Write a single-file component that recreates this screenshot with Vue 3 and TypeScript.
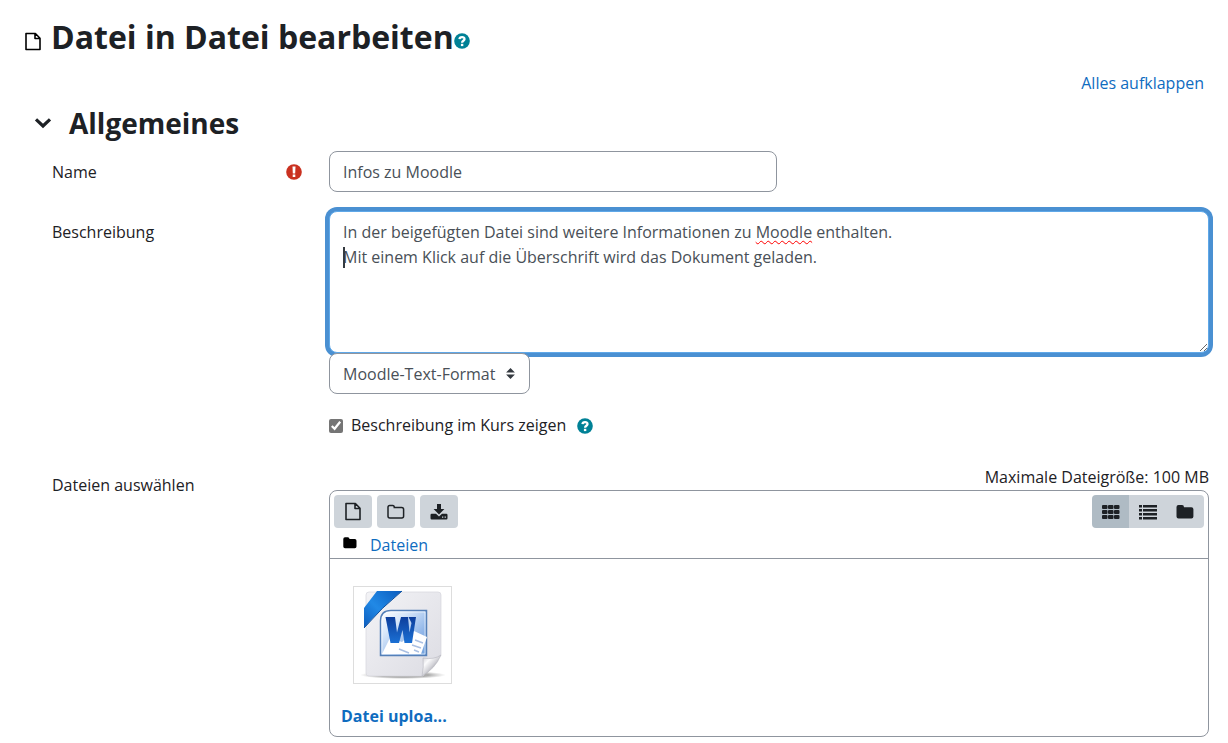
<script setup lang="ts">
import { ref } from 'vue'

const name = ref('Infos zu Moodle')
const lines = [
  { before: 'In der beigefügten Datei sind weitere Informationen zu ', marked: 'Moodle', after: ' enthalten.' },
  { before: 'Mit einem Klick auf die Überschrift wird das Dokument geladen.', marked: '', after: '' },
]
const description = ref(lines.map((l) => l.before + l.marked + l.after).join('\n'))
const format = ref('moodle')
const showDescription = ref(true)
const view = ref('icons')
</script>

<template>
  <main class="page">
    <header class="title">
      <svg class="title-icon" width="16" height="19" viewBox="0 0 16 19" aria-hidden="true">
        <path d="M1 1.5H10.4L15 6.2V17.5H1Z M10 1.5V6.5H15" fill="none" stroke="#000" stroke-width="1.6" stroke-linejoin="round" />
      </svg>
      <h1>Datei in Datei bearbeiten</h1>
      <button type="button" class="help" aria-label="Hilfe zu Datei">
        <svg width="16" height="16" viewBox="0 0 16 16" aria-hidden="true">
          <circle cx="8" cy="8" r="7.8" fill="#008196" />
          <path d="M5.5 6.1C5.7 3.4 10.7 3.5 10.5 6.2C10.4 7.8 8.1 7.7 8.1 9.7" fill="none" stroke="#fff" stroke-width="2.3" />
          <rect x="6.9" y="10.8" width="2.4" height="2.3" fill="#fff" />
        </svg>
      </button>
    </header>

    <form @submit.prevent>
      <div class="expand"><a href="#">Alles aufklappen</a></div>

      <div class="section">
        <button type="button" class="toggle" aria-label="Allgemeines einklappen">
          <svg width="18" height="12" viewBox="0 0 18 12" aria-hidden="true">
            <path d="M2 2.3L9 9L16 2.3" fill="none" stroke="#1d2125" stroke-width="3.2" />
          </svg>
        </button>
        <h2>Allgemeines</h2>
      </div>

      <div class="row">
        <div class="label">
          <label for="name">Name</label>
          <svg class="required" width="16" height="16" viewBox="0 0 16 16" role="img" aria-label="Notwendig">
            <circle cx="8" cy="8" r="7.8" fill="#ca3120" />
            <path d="M6.5 2.6H9.5L9.200 9.400H6.800Z" fill="#fff" />
            <rect x="6.700" y="10.500" width="2.600" height="2.500" fill="#fff" />
          </svg>
        </div>
        <input id="name" v-model="name" class="control name" type="text" />
      </div>

      <div class="row description">
        <div class="label"><label for="description">Beschreibung</label></div>
        <div>
          <div class="editor">
            <textarea id="description" v-model="description" class="control" spellcheck="false"></textarea>
            <div class="marks" aria-hidden="true">
              <div v-for="(line, i) in lines" :key="i"><i v-if="i === 1" class="caret"></i>{{ line.before }}<span class="misspelt">{{ line.marked }}</span>{{ line.after }}</div>
            </div>
          </div>
          <select v-model="format" class="control format" aria-label="Textformat">
            <option value="moodle">Moodle-Text-Format</option>
          </select>
        </div>
      </div>

      <div class="row show">
        <div class="check">
          <input id="show" v-model="showDescription" type="checkbox" />
          <label for="show">Beschreibung im Kurs zeigen</label>
          <button type="button" class="help" aria-label="Hilfe zu Beschreibung im Kurs zeigen">
            <svg width="16" height="16" viewBox="0 0 16 16" aria-hidden="true">
              <circle cx="8" cy="8" r="7.8" fill="#008196" />
              <path d="M5.5 6.1C5.7 3.4 10.7 3.5 10.5 6.2C10.4 7.8 8.1 7.7 8.1 9.7" fill="none" stroke="#fff" stroke-width="2.3" />
              <rect x="6.9" y="10.8" width="2.4" height="2.3" fill="#fff" />
            </svg>
          </button>
        </div>
      </div>

      <div class="row files">
        <div class="label"><span id="files-label">Dateien auswählen</span></div>
        <div role="group" aria-labelledby="files-label">
          <div class="limit">Maximale Dateigröße: 100 MB</div>
          <div class="manager">
            <div class="toolbar">
              <div class="tools">
                <button type="button" class="tool" aria-label="Datei hinzufügen">
                  <svg width="16" height="19" viewBox="0 0 16 19" aria-hidden="true">
                    <path d="M1 1.5H10.4L15 6.2V17.5H1Z M10 1.5V6.5H15" fill="none" stroke="#1d2125" stroke-width="1.6" stroke-linejoin="round" />
                  </svg>
                </button>
                <button type="button" class="tool" aria-label="Verzeichnis anlegen">
                  <svg width="18" height="16" viewBox="0 0 18 16" aria-hidden="true">
                    <path d="M1 3.2Q1 1.5 2.7 1.5H5.7Q7.3 1.5 7.3 3.6H14.6Q16.6 3.6 16.6 5.4V12.3Q16.6 14 14.8 14H2.8Q1 14 1 12.3Z" fill="none" stroke="#1d2125" stroke-width="1.5" />
                  </svg>
                </button>
                <button type="button" class="tool" aria-label="Alles herunterladen">
                  <svg width="18" height="18" viewBox="0 0 18 18" aria-hidden="true">
                    <path d="M7 1H11V6H14.4L9 11.4L3.6 6H7Z M1.7 10.8H6L9 13.6L12 10.8H16.3Q17.5 10.8 17.5 12V15.3Q17.5 16.5 16.3 16.5H1.7Q.5 16.5 .5 15.3V12Q.5 10.8 1.7 10.8Z" fill="#1d2125" />
                    <path d="M12 14.2H13.3M14.6 14.2H15.9" stroke="#ced4da" stroke-width="1.3" />
                  </svg>
                </button>
              </div>
              <div class="views">
                <button type="button" :class="{ active: view === 'icons' }" aria-label="Symbole" @click="view = 'icons'">
                  <svg width="20" height="16" viewBox="0 0 20 16" fill="#1d2125" aria-hidden="true">
                    <template v-for="y in [1, 6, 11]" :key="y">
                      <rect v-for="x in [1, 7, 13]" :key="x" :x="x" :y="y" width="5.500" height="4" rx="1" />
                    </template>
                  </svg>
                </button>
                <button type="button" :class="{ active: view === 'list' }" aria-label="Liste" @click="view = 'list'">
                  <svg width="20" height="16" viewBox="0 0 20 16" fill="#1d2125" aria-hidden="true">
                    <template v-for="y in [1, 5, 9, 13]" :key="y">
                      <rect x="1" :y="y" width="3" height="2.500" />
                      <rect x="5" :y="y" width="14" height="2.500" />
                    </template>
                  </svg>
                </button>
                <button type="button" :class="{ active: view === 'tree' }" aria-label="Baum" @click="view = 'tree'">
                  <svg width="18" height="16" viewBox="0 0 18 16" aria-hidden="true">
                    <path d="M.5 3Q.5 1 2.5 1H6Q8 1 8 3.2H15.4Q17.4 3.2 17.4 5.2V12.5Q17.4 14.5 15.4 14.5H2.5Q.5 14.5 .5 12.5Z" fill="#1d2125" />
                  </svg>
                </button>
              </div>
            </div>
            <div class="path">
              <svg width="14" height="12" viewBox="0 0 14 12" aria-hidden="true">
                <path d="M.3 2Q.3 .3 2 .3H4.8Q6.5 .3 6.5 2H11.8Q13.5 2 13.5 3.7V9.6Q13.5 11.3 11.8 11.3H2Q.3 11.3 .3 9.6Z" fill="#000" />
              </svg>
              <a href="#">Dateien</a>
            </div>
            <div class="content">
              <a href="#" class="file">
                <span class="thumb">
                  <svg width="97" height="96" viewBox="0 0 97 96" aria-hidden="true">
                    <defs>
                      <linearGradient id="paper" x1="0" y1="0" x2="1" y2="1"><stop offset="0" stop-color="#f3f3f6" /><stop offset="1" stop-color="#dcdce3" /></linearGradient>
                      <linearGradient id="ribbon" x1="0" y1="1" x2="1" y2="0"><stop offset="0" stop-color="#0d5cbc" /><stop offset=".45" stop-color="#2189e6" /><stop offset="1" stop-color="#0b5cbd" /></linearGradient>
                      <linearGradient id="tile" x1="0" y1="0" x2="1" y2="1"><stop offset="0" stop-color="#ffffff" /><stop offset=".3" stop-color="#d9e8fa" /><stop offset=".7" stop-color="#8fb5e8" /><stop offset="1" stop-color="#6fa0dd" /></linearGradient>
                      <linearGradient id="letter" x1="0" y1="0" x2="0" y2="1"><stop offset="0" stop-color="#0d3e9c" /><stop offset="1" stop-color="#1b70d4" /></linearGradient>
                      <linearGradient id="curl" x1="0" y1="0" x2="1" y2="1"><stop offset="0" stop-color="#c4c4cc" /><stop offset=".3" stop-color="#fbfbfc" /><stop offset=".5" stop-color="#d5d5da" /><stop offset=".65" stop-color="#aaaab2" /></linearGradient>
                      <radialGradient id="shade"><stop offset=".6" stop-color="#777" stop-opacity=".6" /><stop offset="1" stop-color="#999" stop-opacity="0" /></radialGradient>
                    </defs>
                    <ellipse cx="49" cy="88" rx="43" ry="4" fill="url(#shade)" />
                    <path d="M12 8Q12 5 15 5H84Q87 5 87 8V68L69 89H15Q12 89 12 86Z" fill="url(#paper)" stroke="#d5d5dc" stroke-width=".7" />
                    <path d="M68 89Q70 80 69 71Q80 73 87 68Q81 82 68 89Z" fill="url(#curl)" stroke="#b5b5bd" stroke-width=".6" />
                    <path d="M23 4H48Q28 20 10 41V21Z" fill="url(#ribbon)" />
                    <path d="M48 4Q28 20 10 41" fill="none" stroke="#0d4e9c" stroke-width="1" />
                    <path d="M37 23.500H72.500V68.500H26.500V34Q26.500 23.500 37 23.500Z" fill="url(#tile)" stroke="#5580b8" stroke-width="1.500" />
                    <path d="M37 25H71V67H28V34Q28 25 37 25Z" fill="none" stroke="#fff" stroke-opacity=".6" />
                    <path d="M36 51L48 55L60 44L73 50L67 67H28Z" fill="#fff" />
                    <path d="M61 53L69 56M58 58L67 61M45 62L55 66M60 63L65 65" stroke="#a9bfe2" stroke-width="1.500" />
                    <path d="M31.500 30H41L43 45.500L47 30H54L55.500 45.500L57.500 36L54.500 30H62L58 56H50.500L48.500 43L45 56H36.500Z" fill="url(#letter)" />
                  </svg>
                </span>
                <span class="filename">Datei uploa...</span>
              </a>
            </div>
          </div>
        </div>
      </div>
    </form>
  </main>
</template>

<style>
body {
  margin: 0;
  background: #fff;
}
</style>

<style scoped>
* {
  box-sizing: border-box;
}
.page {
  padding: 12px 19px 6px 25px;
  font: 16px/25px "Open Sans", "Noto Sans", sans-serif;
  color: #1d2125;
}
a {
  color: #0f6cbf;
  text-decoration: none;
}
button {
  margin: 0;
  padding: 0;
  border: 0;
  background: none;
  color: inherit;
  font: inherit;
}
svg {
  display: block;
}
h1,
h2 {
  margin: 0;
  font-weight: 700;
}
.title {
  display: flex;
  align-items: center;
  height: 50px;
}
.title-icon {
  margin: 8px 10px 0 0;
}
h1 {
  font-size: 32px;
  line-height: 50px;
}
.help {
  margin: 8px 0 0;
}
.expand {
  margin-top: 9px;
  padding-right: 5px;
  text-align: right;
}
.section {
  display: flex;
  align-items: center;
  height: 36px;
  margin: 9px 0 10px 9px;
}
.toggle {
  width: 35px;
}
h2 {
  font-size: 28px;
  line-height: 36px;
}
.row {
  display: grid;
  grid-template-columns: 277px minmax(0, 1fr);
  padding-left: 27px;
}
.label {
  display: flex;
  justify-content: space-between;
  align-items: flex-start;
  padding: 9px 27px 0 0;
}
.required {
  margin-top: 4px;
}
.control {
  border: 1px solid #8f959e;
  border-radius: 8px;
  background: #fff;
  color: #495057;
  font: inherit;
  outline: 0;
}
.name {
  width: 448px;
  max-width: 100%;
  height: 41px;
  padding: 0 13px;
}
.description {
  margin-top: 19px;
}
.editor {
  position: relative;
}
textarea {
  display: block;
  width: 100%;
  height: 142px;
  padding: 8px 13px;
  resize: vertical;
}
.editor textarea {
  border-color: #5fa8e8;
  box-shadow: 0 0 0 4px #4a90d2;
}
.marks {
  position: absolute;
  inset: 0;
  padding: 9px 14px;
  color: transparent;
  pointer-events: none;
}
.misspelt {
  text-decoration: underline wavy #f00 1px;
  text-underline-offset: 2px;
  text-decoration-skip-ink: none;
}
.caret {
  display: inline-block;
  width: 2px;
  height: 21px;
  margin-right: -2px;
  vertical-align: -5px;
  background: #343a40;
}
.format {
  position: relative;
  display: block;
  width: 201px;
  height: 41px;
  padding: 1px 13px 0;
  appearance: none;
  background: #fff url("data:image/svg+xml,%3Csvg xmlns='http://www.w3.org/2000/svg' viewBox='0 0 4 5'%3E%3Cpath fill='%23343a40' d='M2 0L0 2h4zm0 5L0 3h4z'/%3E%3C/svg%3E") no-repeat right 14px center / 9px 11px;
}
.show {
  margin-top: 19px;
}
.check {
  grid-column: 2;
  display: flex;
  align-items: center;
}
.check input {
  width: 14px;
  height: 14px;
  margin: 0 8px 0 0;
  accent-color: #757575;
}
.check .help {
  margin: 0 0 0 11px;
}
.files {
  margin-top: 27px;
}
.files .label {
  padding-top: 8px;
}
.limit {
  text-align: right;
}
.manager {
  border: 1px solid #8f959e;
  border-radius: 8px;
}
.toolbar {
  display: flex;
  justify-content: space-between;
  padding: 4px;
}
.tools {
  display: flex;
  gap: 5px;
}
.tool,
.views button {
  display: flex;
  align-items: center;
  justify-content: center;
  width: 38px;
  height: 33px;
  background: #ced4da;
}
.tool {
  border-radius: 4px;
}
.views {
  display: flex;
  overflow: hidden;
  border-radius: 4px;
}
.views button {
  width: 37px;
}
.views .active {
  background: #afbbc4;
}
.views button:last-child {
  width: 38px;
}
.path {
  display: flex;
  align-items: flex-start;
  gap: 13px;
  height: 27px;
  padding: 1px 13px 0;
  border-bottom: 1px solid #8f959e;
}
.path svg {
  margin-top: 4px;
}
.content {
  min-height: 177px;
  padding: 27px 11px 7px;
}
.file {
  display: block;
  width: 122px;
}
.thumb {
  display: block;
  width: 99px;
  margin-left: 12px;
  border: 1px solid #ddd;
}
.filename {
  display: block;
  margin-top: 20px;
  font-weight: 700;
}
</style>
